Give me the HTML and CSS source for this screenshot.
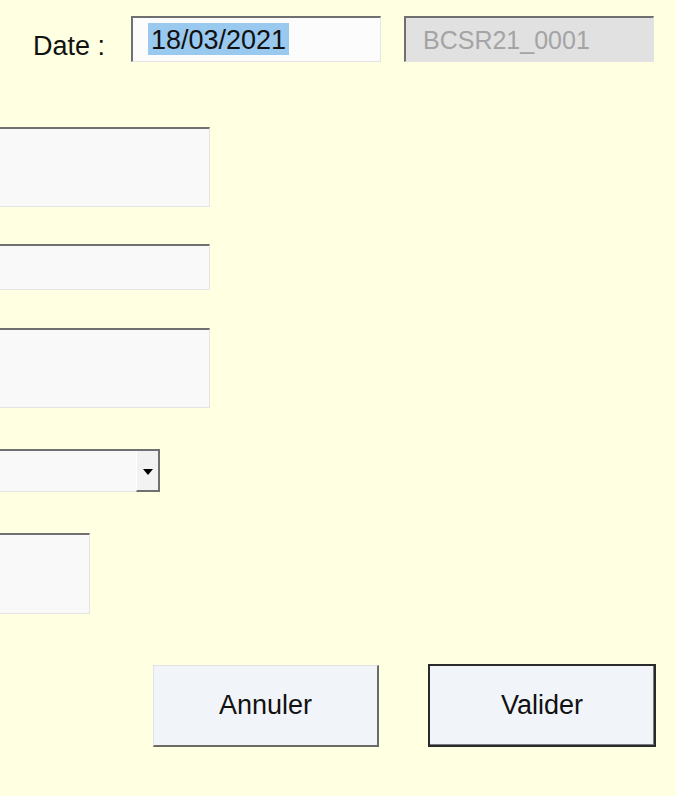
FILE: index.html
```html
<!DOCTYPE html>
<html lang="fr">
<head>
<meta charset="utf-8">
<title>Bon de commande</title>
<link rel="stylesheet" href="styles.css">
</head>
<body>
<div class="form">
  <div class="head">
    <span class="lbl">Date :</span>
    <div class="field date"><span class="sel">18/03/2021</span></div>
    <div class="field ref">BCSR21_0001</div>
  </div>
  <div class="fields">
    <div class="field box b1"></div>
    <div class="field box b2"></div>
    <div class="field box b3"></div>
    <div class="combo">
      <div class="combo-text"></div>
      <div class="combo-btn"><span class="tri"></span></div>
    </div>
    <div class="field box b5"></div>
  </div>
  <div class="actions">
    <button class="btn cancel" type="button">Annuler</button>
    <button class="btn ok" type="button">Valider</button>
  </div>
</div>
</body>
</html>
```
FILE: styles.css
```css
html, body {
  margin: 0;
  padding: 0;
  background: #ffffe1;
  overflow: hidden;
}
body {
  width: 676px;
  height: 796px;
  font-family: "Liberation Sans", Arial, sans-serif;
  color: #111;
}
.form {
  display: flex;
  flex-direction: column;
  padding-top: 16px;
}
.head {
  display: flex;
  align-items: flex-start;
  height: 46px;
}
.lbl {
  font-size: 27px;
  line-height: 31px;
  margin-left: 33px;
  margin-top: 15px;
  width: 98px;
}
.field {
  box-sizing: border-box;
  background: #f9f9fa;
  border-top: 2px solid #707070;
  border-left: 2px solid #707070;
  border-right: 1px solid #e4e4e4;
  border-bottom: 1px solid #e4e4e4;
}
.date {
  width: 250px;
  height: 46px;
  padding: 5px 0 0 15px;
  background: #fcfcfc;
}
.sel {
  display: inline-block;
  font-size: 27px;
  line-height: 32px;
  padding: 1px 3px 0;
  height: 32px;
  box-sizing: border-box;
  background: #99c9ef;
  color: #111;
}
.ref {
  width: 250px;
  height: 46px;
  margin-left: 23px;
  background: #e1e1e1;
  color: #a4a4a4;
  font-size: 25px;
  display: flex;
  align-items: center;
  padding-left: 17px;
  padding-top: 1px;
}
.fields {
  display: flex;
  flex-direction: column;
  margin-left: -100px;
}
.box {
  border-left: none;
}
.b1 { margin-top: 65px; width: 310px; height: 80px; }
.b2 { margin-top: 37px; width: 310px; height: 46px; }
.b3 { margin-top: 38px; width: 310px; height: 80px; }
.b5 { margin-top: 41px; width: 190px; height: 81px; }
.combo {
  margin-top: 41px;
  width: 260px;
  height: 43px;
  display: flex;
  box-sizing: border-box;
  border-top: 2px solid #707070;
}
.combo-text {
  flex: 1;
  background: #f9f9fa;
  border-bottom: 1px solid #e4e4e4;
}
.combo-btn {
  width: 24px;
  box-sizing: border-box;
  background: #f2f2f2;
  border-left: 1px solid #ffffff;
  border-right: 2px solid #707070;
  border-bottom: 2px solid #707070;
  display: flex;
  align-items: center;
  justify-content: center;
}
.tri {
  width: 0;
  height: 0;
  border-left: 5px solid transparent;
  border-right: 5px solid transparent;
  border-top: 6px solid #000;
  margin-top: 2px;
}
.actions {
  display: flex;
  align-items: flex-start;
  margin-top: 50px;
  margin-left: 153px;
  gap: 49px;
}
.btn {
  box-sizing: border-box;
  font-family: "Liberation Sans", Arial, sans-serif;
  font-size: 27px;
  color: #111;
  background: #f1f5f9;
  padding: 0;
  margin: 0;
  display: flex;
  align-items: center;
  justify-content: center;
}
.cancel {
  width: 226px;
  height: 82px;
  margin-top: 1px;
  border-top: 1px solid #e2e2e2;
  border-left: 1px solid #e2e2e2;
  border-right: 2px solid #6b6b66;
  border-bottom: 2px solid #6b6b66;
}
.ok {
  width: 228px;
  height: 83px;
  border: 2px solid #2a2a2a;
  box-shadow: inset -1px -1px 0 #7a7a7a;
}
```
